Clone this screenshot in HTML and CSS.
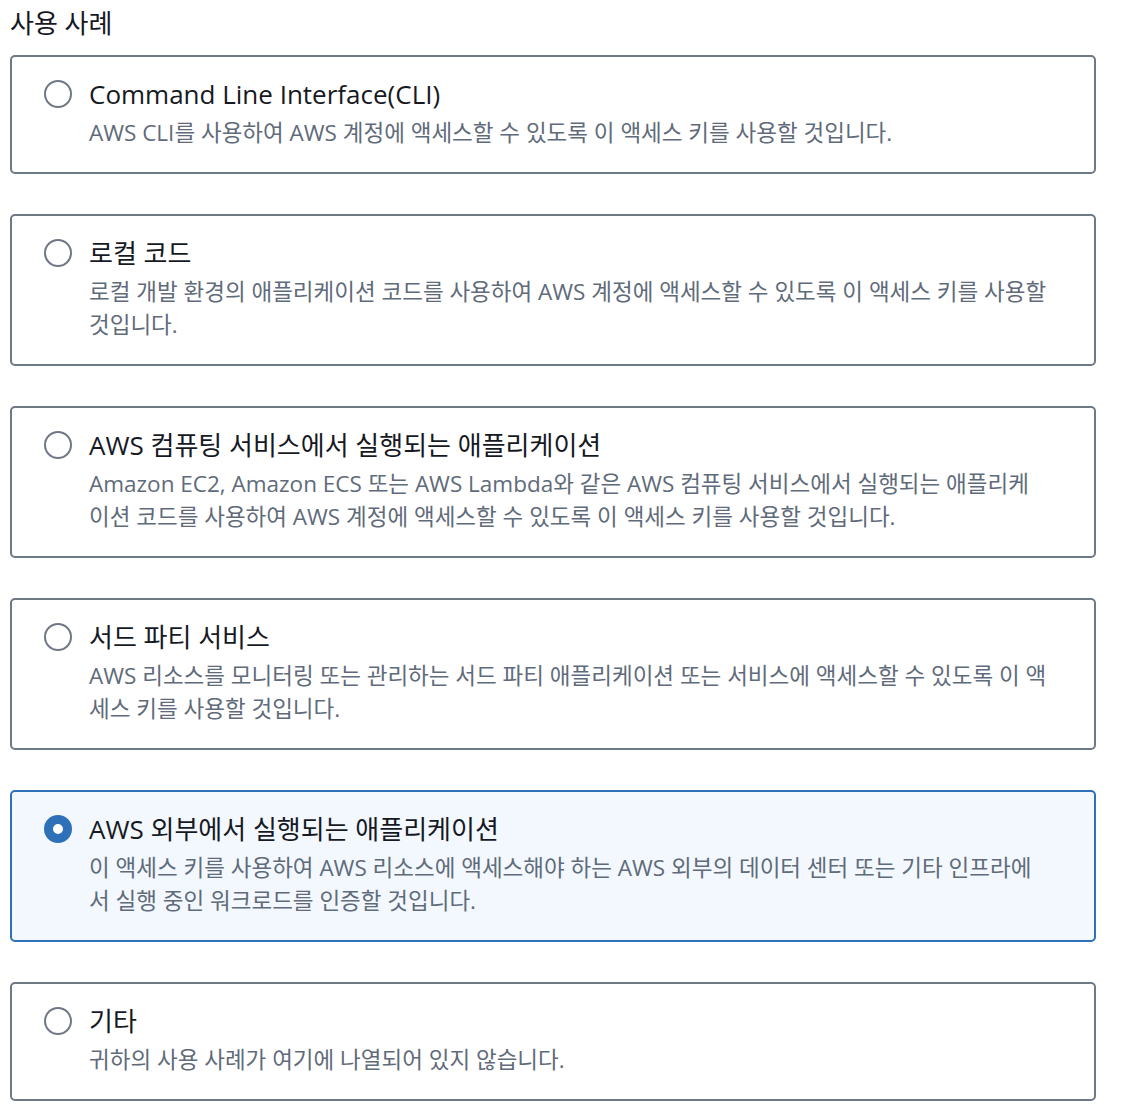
FILE: index.html
```html
<!DOCTYPE html>
<html lang="ko">
<head>
<meta charset="utf-8">
<link rel="stylesheet" href="styles.css">
</head>
<body>
<div class="page">
  <h2 class="heading">사용 사례</h2>
  <div class="options">
    <label class="card">
      <span class="radio"></span>
      <span class="body">
        <span class="title">Command Line Interface(CLI)</span>
        <span class="desc">AWS CLI를 사용하여 AWS 계정에 액세스할 수 있도록 이 액세스 키를 사용할 것입니다.</span>
      </span>
    </label>
    <label class="card">
      <span class="radio"></span>
      <span class="body">
        <span class="title">로컬 코드</span>
        <span class="desc">로컬 개발 환경의 애플리케이션 코드를 사용하여 AWS 계정에 액세스할 수 있도록 이 액세스 키를 사용할 것입니다.</span>
      </span>
    </label>
    <label class="card">
      <span class="radio"></span>
      <span class="body">
        <span class="title">AWS 컴퓨팅 서비스에서 실행되는 애플리케이션</span>
        <span class="desc">Amazon EC2, Amazon ECS 또는 AWS Lambda와 같은 AWS 컴퓨팅 서비스에서 실행되는 애플리케이션 코드를 사용하여 AWS 계정에 액세스할 수 있도록 이 액세스 키를 사용할 것입니다.</span>
      </span>
    </label>
    <label class="card">
      <span class="radio"></span>
      <span class="body">
        <span class="title">서드 파티 서비스</span>
        <span class="desc">AWS 리소스를 모니터링 또는 관리하는 서드 파티 애플리케이션 또는 서비스에 액세스할 수 있도록 이 액세스 키를 사용할 것입니다.</span>
      </span>
    </label>
    <label class="card selected">
      <span class="radio"></span>
      <span class="body">
        <span class="title">AWS 외부에서 실행되는 애플리케이션</span>
        <span class="desc">이 액세스 키를 사용하여 AWS 리소스에 액세스해야 하는 AWS 외부의 데이터 센터 또는 기타 인프라에서 실행 중인 워크로드를 인증할 것입니다.</span>
      </span>
    </label>
    <label class="card">
      <span class="radio"></span>
      <span class="body">
        <span class="title">기타</span>
        <span class="desc">귀하의 사용 사례가 여기에 나열되어 있지 않습니다.</span>
      </span>
    </label>
  </div>
</div>
</body>
</html>
```
FILE: styles.css
```css
html, body {
  margin: 0;
  padding: 0;
  background: #ffffff;
}
body {
  font-family: "Open Sans", "Noto Sans CJK KR", sans-serif;
  color: #16191f;
}
.page {
  width: 1086px;
  padding: 8px 0 0 10px;
}
.heading {
  margin: 0;
  font-size: 26px;
  line-height: 30px;
  font-weight: 400;
  color: #16191f;
}
.options {
  margin-top: 17px;
  display: flex;
  flex-direction: column;
  gap: 40px;
}
.card {
  display: flex;
  align-items: flex-start;
  border: 2px solid #6f7885;
  border-radius: 5px;
  padding: 19px 47px 23px 32px;
  background: #ffffff;
}
.card.selected {
  border-color: #2f71b8;
  background: #f2f8fd;
}
.radio {
  flex: none;
  box-sizing: border-box;
  width: 28px;
  height: 28px;
  margin-top: 4px;
  margin-right: 17px;
  border: 2px solid #6f7885;
  border-radius: 50%;
  background: #fff;
}
.card.selected .radio {
  border: 9px solid #2f71b8;
}
.body {
  display: flex;
  flex-direction: column;
  gap: 4px;
  min-width: 0;
}
.title {
  font-size: 26px;
  line-height: 36px;
  color: #16191f;
}
.desc {
  font-size: 22.5px;
  line-height: 33px;
  color: #5f6b7a;
}
```
